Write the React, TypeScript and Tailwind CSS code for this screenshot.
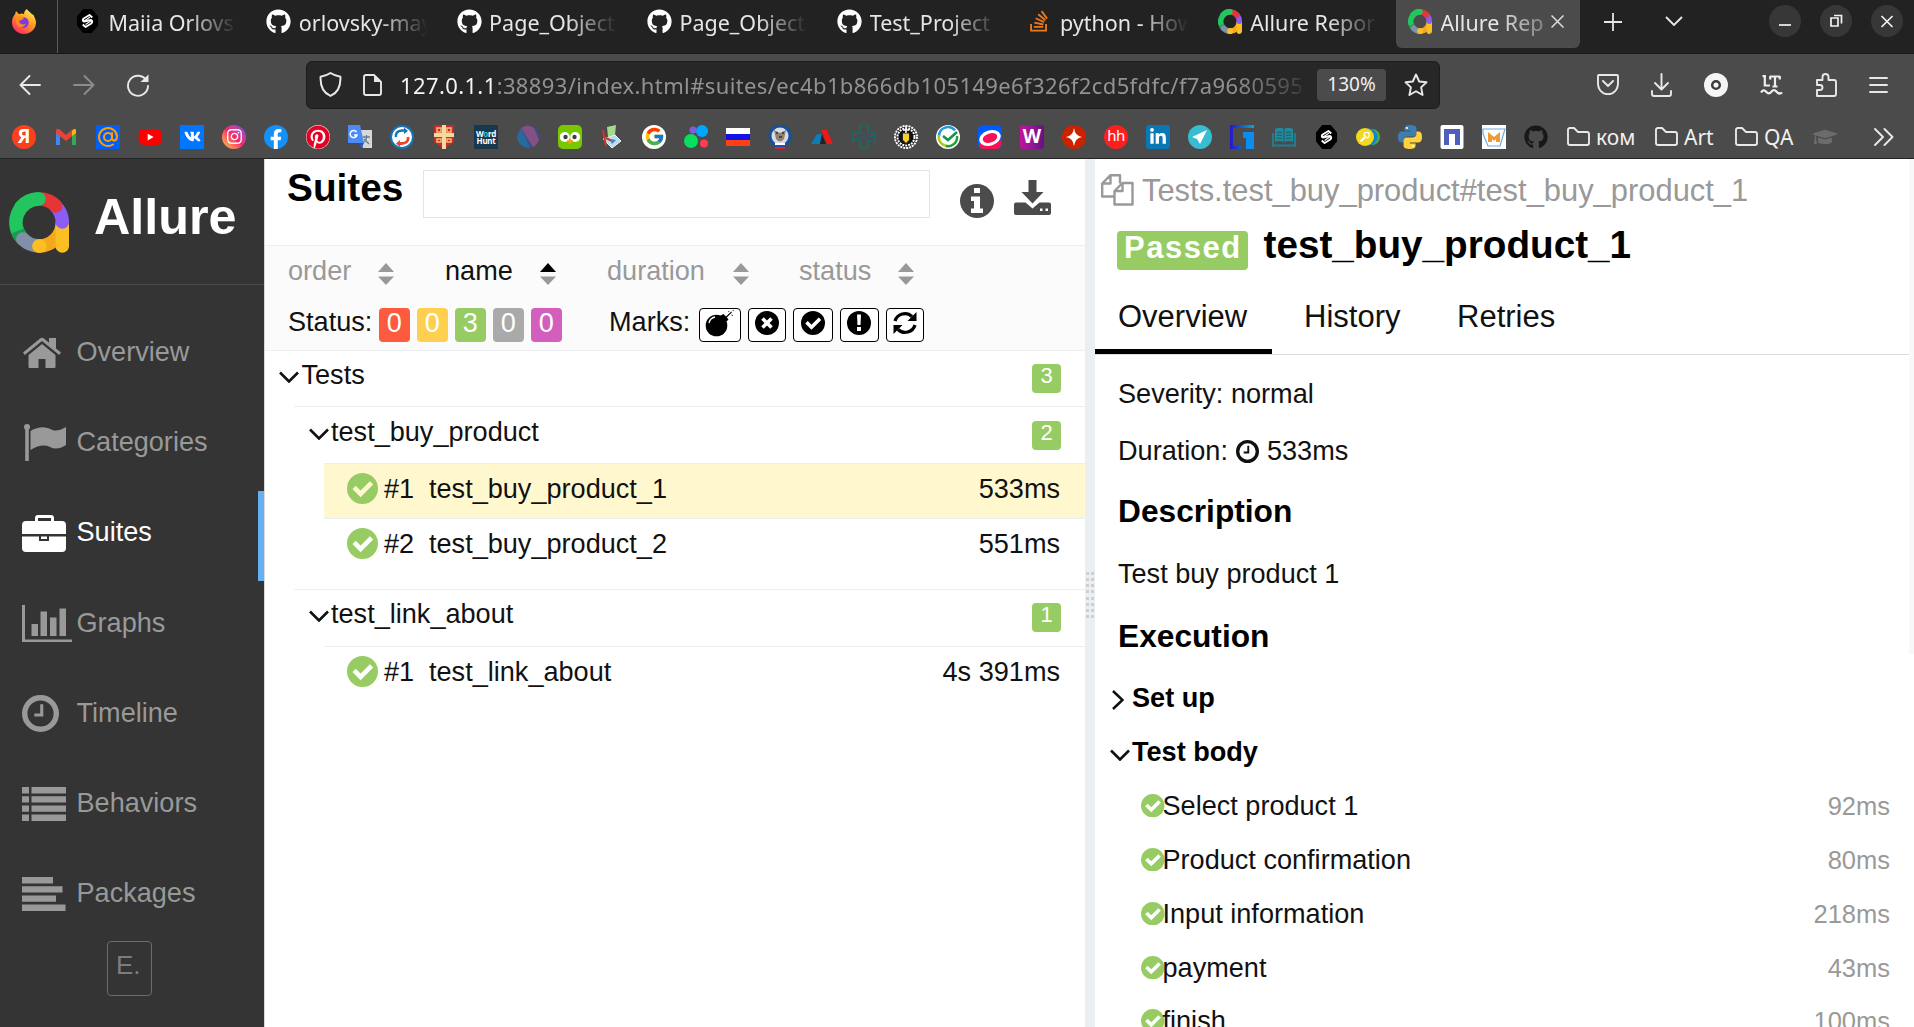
import React from "react";
import {
  FaGithub, FaYoutube, FaVk, FaPinterest, FaStackOverflow,
  FaInstagram, FaFacebookF, FaLinkedinIn, FaGraduationCap,
} from "react-icons/fa";
import { FcGoogle } from "react-icons/fc";

type SvgProps = { className?: string; children?: React.ReactNode; box?: string };
const Svg = ({ className = "size-6", children, box = "0 0 24 24" }: SvgProps) => (
  <svg viewBox={box} className={`${className} shrink-0`} fill="none" preserveAspectRatio="none">{children}</svg>
);

/* ---------- logos ---------- */
const AllureLogo = ({ className }: { className?: string }) => (
  <Svg className={className} box="0 0 60 61">
    <g strokeWidth="13.5" strokeLinecap="round">
      <path d="M30 7A23.4 23.4 0 0 0 13.8 47" stroke="#22c55e" />
      <path d="M8.500 39A23.4 23.4 0 0 0 13.8 47" stroke="#1a9c50" strokeLinecap="butt" />
      <path d="M13.8 47A23.4 23.4 0 0 0 30 54" stroke="#8090a8" />
      <path d="M30 54A23.4 23.4 0 0 0 53.3 31" stroke="#f5a81c" />
      <path d="M30 54H31M53.3 34V54" stroke="#fbbf24" />
      <path d="M47 14.5A23.4 23.4 0 0 1 53.3 30" stroke="#8b5cf6" />
      <path d="M34 7.2A23.4 23.4 0 0 1 46.8 14" stroke="#e53535" />
      <path d="M30 7A23.4 23.4 0 0 0 12 15" stroke="#22c55e" />
    </g>
  </Svg>
);
const Firefox = () => (
  <Svg className="h-[25px] w-6">
    <defs>
      <linearGradient id="ff" x1="0.8" y1="0" x2="0.2" y2="1">
        <stop offset="0" stopColor="#fff44f" /><stop offset=".45" stopColor="#ff9a1f" /><stop offset="1" stopColor="#ff2068" />
      </linearGradient>
    </defs>
    <path d="M15 0c1 2 3 3 5 5 1 0 2 1 2 2 1 2 2 4 2 6 0 6-5 11-12 11S0 19 0 13c0-3 1-6 3-8l1-3 3 3c2-1 4-1 5 0 0-2 1-4 3-5z" fill="url(#ff)" />
    <circle cx="11.7" cy="13" r="5" fill="#7b3be0" />
    <path d="M4 8c3-2 6-1 8 1-2 1-3 2-5 2 0 3 3 5 7 3-2 5-9 4-10-1z" fill="#ff8a20" />
  </Svg>
);
const Solid = () => (
  <Svg className="h-6 w-[23px]">
    <path d="M8 1h8l6 7v8l-6 7H8l-6-7V8z" fill="#000" stroke="#000" strokeLinejoin="round" strokeWidth="2" />
    <path d="M17 8.500 14 6 8 9.500q-2 2 .5 3l7-1.500q2.500 1 .5 3.500L10 18l-3-2.500" stroke="#fff" strokeWidth="2" strokeLinejoin="round" />
    <path d="M8.500 12 14.500 8.200M10 15.500l5.500-3.500" stroke="#fff" strokeWidth="1.300" />
  </Svg>
);

/* ---------- browser chrome ---------- */
const gh = <FaGithub className="size-[25px] text-white" />;
const tabs: { icon: React.ReactNode; title: string }[] = [
  { icon: <Solid />, title: "Maiia Orlovs" },
  { icon: gh, title: "orlovsky-may" },
  { icon: gh, title: "Page_Object" },
  { icon: gh, title: "Page_Object" },
  { icon: gh, title: "Test_Project" },
  { icon: <span className="flex size-6 justify-center"><FaStackOverflow className="h-6 w-5 text-[#e87a1c]" /></span>, title: "python - How" },
  { icon: <AllureLogo className="h-[25px] w-6" />, title: "Allure Repor" },
  { icon: <AllureLogo className="h-[25px] w-6" />, title: "Allure Rep" },
];

const TabBar = () => (
  <div className="flex h-[54px] shrink-0 border-b border-[#191919] bg-[#222222] text-[#e6e6e6]">
    <div className="flex w-[58px] items-start justify-center border-r border-[#5a5a5a] pt-[9px] pr-[10px]"><Firefox /></div>
    <div className="flex pl-[6px]">
      {tabs.map((t, i) => (
        <div key={i} className={`mr-[6.300px] flex h-12 w-[184px] items-start rounded-b-md pl-3 pt-[9px] ${i === 7 ? "bg-[#4b4b4b]" : ""}`}>
          <div className="flex w-[32.500px] shrink-0">{t.icon}</div>
          <div className={`h-7 shrink-0 whitespace-nowrap text-[21.500px] leading-[27px] ${i === 7 ? "w-[103px] [mask-image:linear-gradient(to_right,black_55%,rgba(0,0,0,0.35))]" : "w-[131px] [mask-image:linear-gradient(to_right,black_60%,transparent_98%)]"}`}>{t.title}</div>
          {i === 7 && <Svg className="ml-[7px] mt-[6px] size-[13px]" box="0 0 13 13"><path d="M.5.5l12 12M12.500.500l-12 12" stroke="#ddd" strokeWidth="1.500" /></Svg>}
        </div>
      ))}
    </div>
    <div className="flex grow items-start justify-between pl-[18px] pr-[11px] pt-[5px]">
      <div className="flex gap-[43px] pt-[8px]">
        <Svg className="size-[18px]" box="0 0 18 18"><path d="M9 0v18M0 9h18" stroke="#e6e6e6" strokeWidth="1.800" /></Svg>
        <Svg className="mt-[3px] h-[10px] w-[18px]" box="0 0 18 10"><path d="M1 1l8 8 8-8" stroke="#e6e6e6" strokeWidth="1.900" /></Svg>
      </div>
      <div className="flex gap-[19px]">
        {["M10 20h12", "M11 13h7v8h-7zM14 10.500h7.500v8", "M10.500 11l11 11M21.500 11l-11 11"].map((d) => (
          <span key={d} className="flex size-8 rounded-full bg-[#373737]"><Svg className="size-8" box="0 0 32 32"><path d={d} stroke="#f2f2f2" strokeWidth="1.700" /></Svg></span>
        ))}
      </div>
    </div>
  </div>
);

const ln = { stroke: "#e8e8e8", strokeWidth: 1.9, strokeLinecap: "round" as const, strokeLinejoin: "round" as const };

const Toolbar = () => (
  <div className="flex h-[61px] shrink-0 items-center">
    <div className="flex w-[306px] gap-[30px] pl-[18px]">
      <Svg><path d="M22 12H2.500M11.500 3 2.500 12l9 9" {...ln} /></Svg>
      <Svg><path d="M2 12h19.500M12.500 3l9 9-9 9" {...ln} stroke="#8c8c8c" /></Svg>
      <Svg><path d="M20.500 7.500A10 10 0 1 0 22 13" {...ln} /><path d="M22.500 1.500V9h-8z" fill="#e8e8e8" /></Svg>
    </div>
    <div className="flex h-12 w-[1134px] items-center rounded-md border border-[#1c1c1c] bg-[#272727] pl-[11px]">
      <Svg className="size-[25px]"><path d="M12 1c3 2 6 3 9.500 3.500C22 14 19 20 12 23 5 20 2 14 2.500 4.500 6 4 9 3 12 1z" {...ln} /></Svg>
      <Svg className="ml-[20px] h-[22px] w-[19px]" box="0 0 19 22"><path d="M3 1h8l7 7v11q0 2-2 2H3q-2 0-2-2V3q0-2 2-2z" {...ln} /><path d="M11 1v7h7z" fill="#e8e8e8" /></Svg>
      <div className="ml-[18px] w-[905px] shrink-0 whitespace-nowrap text-[22px] leading-7 tracking-[0.380px] text-[#929292] [mask-image:linear-gradient(to_right,black_92%,rgba(0,0,0,0.3)_99%,transparent)]">
        <span className="text-[#f4f4f4]">127.0.1.1</span>:38893/index.html#suites/ec4b1b866db105149e6f326f2cd5fdfc/f7a9680595
      </div>
      <div className="ml-[12px] flex h-8 w-[69px] items-center justify-center rounded-[4px] bg-[#4b4b4b] text-[19px] text-[#f0f0f0]">130%</div>
      <Svg className="ml-[18px] size-[24px]"><path d="M12 1.500l3.200 7 7.300.8-5.400 5.100 1.500 7.600L12 18.200 5.400 22l1.500-7.600L1.500 9.300l7.300-.8z" {...ln} /></Svg>
    </div>
    <div className="flex grow items-center justify-between pl-[157px] pr-[26px]">
      <Svg className="h-[21px] w-[22px]" box="0 0 22 21"><path d="M2 1h18q1 0 1 1v7c0 15-20 15-20 0V2q0-1 1-1zM6 7l5 5 5-5" {...ln} /></Svg>
      <Svg className="h-6 w-[21px]" box="0 0 21 24"><path d="M10.500 1v15M4 10l6.500 6.500L17 10M1 18v3q0 2 2 2h15q2 0 2-2v-3" {...ln} /></Svg>
      <Svg><circle cx="12" cy="12" r="12" fill="#f5f5f5" /><circle cx="12" cy="12" r="3.800" stroke="#3c3c3c" strokeWidth="2.500" /></Svg>
      <Svg className="h-5 w-[23px]" box="0 0 23 20"><path d="M2.500 1.200H6M4.800 0v10.500H10M10 1.500h10M15 1.500V12M10.200 1v3.500M19.800 1v3.500M12.500 11.500h5" stroke="#eee" strokeWidth="2.200" /><path d="M1 17.500q2.600-4 5.200-.8t5.200 0 5.200 0 5.600.8" stroke="#eee" strokeWidth="2.200" /></Svg>
      <Svg className="h-6 w-[22px]" box="0 0 22 24"><path d="M2 23V17h3q2.500 0 2.500-2.500T5 12H2V7h5.500V4q0-3 3-3t3 3v3H19q2 0 2 2v12q0 2-2 2z" {...ln} /></Svg>
      <Svg className="h-[16px] w-[19px]" box="0 0 19 16"><path d="M1 1h17M1 8h17M1 15h17" {...ln} /></Svg>
    </div>
  </div>
);

const Sq = ({ c, children }: { c: string; children?: React.ReactNode }) => (
  <span className={`flex size-6 shrink-0 items-center justify-center ${c}`}>{children}</span>
);

const Bookmarks = () => (
  <div className="flex h-[44px] shrink-0 items-center border-b border-[#232323] pl-3 text-[#f0f0f0]">
    <div className="flex gap-[18px]">
      <Sq c="rounded-full bg-[#fc3f1d] text-[19px] font-bold leading-none text-white">Я</Sq>
      <Svg><path d="M2 20V6l4 3v11z" fill="#4285f4" /><path d="M18 20V9l4-3v14z" fill="#34a853" /><path d="M2 6q0-3 3-2l7 6 7-6q3-1 3 2v2l-10 8L2 8z" fill="#ea4335" /><path d="M18 6q4-4 4 0v2l-4 3z" fill="#fbbc04" /></Svg>
      <Svg><path d="M0 0h24v24H0z" fill="#005ff9" /><circle cx="12" cy="12" r="4" stroke="#ff9e00" strokeWidth="2" /><path d="M16 8v5q.5 3 3 2.500 2-1 2-3.500a9 9 0 1 0-4 7.500" stroke="#ff9e00" strokeWidth="2" strokeLinecap="round" /></Svg>
      <FaYoutube className="size-6 text-[#ff0000] [background:linear-gradient(white,white)_center/8px_8px_no-repeat]" />
      <Sq c="bg-[#0077ff]"><FaVk className="size-[17px] text-white" /></Sq>
      <Sq c="rounded-full bg-gradient-to-bl from-[#7a2be8] via-[#fb1e67] to-[#fdc02e]"><FaInstagram className="size-[17px] text-white" /></Sq>
      <Sq c="rounded-full bg-[#1590f5]"><FaFacebookF className="mt-[4px] size-[20px] text-white" /></Sq>
      <span className="size-6 rounded-full bg-white"><FaPinterest className="size-6 text-[#e60023]" /></span>
      <Svg><path d="M9 5h15v18h-9z" fill="#d8d8d8" /><path d="M0 0h12l4 18H0z" fill="#4c8bf5" /><path d="M8.500 7A3.500 3.500 0 1 0 9 10H6" stroke="#fff" strokeWidth="1.500" /><path d="M15 12h7M18.500 10v2q0 4-4 6M16 14l5 5" stroke="#5f7f90" strokeWidth="1.300" /><path d="M11 18h5l-3 6z" fill="#2857c8" /></Svg>
      <Svg><circle cx="12" cy="12" r="11" fill="#fff" stroke="#1674b8" strokeWidth="2" /><path d="M6 12q-1-6 6-6.500h3" stroke="#1677b8" strokeWidth="2.500" /><path d="M14 2.500 18 6l-4 3z" fill="#1677b8" /><path d="M18 12q1 6-6 6.500H9" stroke="#e5482f" strokeWidth="2.800" /><path d="M10 15 6 18.500 10 22z" fill="#e5482f" /></Svg>
      <Svg><path d="M2 0h20v17l-10 7-10-7z" fill="#c92c28" /><path d="M12 0v24M2 10h20" stroke="#f6d9a0" strokeWidth="4" /><path d="M5 3h4v4H5zM15 3h4v4h-4zM5 14h4v3H5zM15 14h4v3h-4z" stroke="#f2bd78" strokeWidth="1.500" /></Svg>
      <Sq c="flex-col bg-[#17384d] text-[8px] font-bold leading-[7px] tracking-[-0.300px] text-white"><span>W<span className="text-[#24c7ce]">o</span>rd</span><span>Hunt</span></Sq>
      <Svg><circle cx="12" cy="12" r="11" fill="#37508e" /><path d="M5 3q7-5 13 0l5 12q-3 6-6 7z" fill="#855083" /><path d="M5 3 1 12q1 10 13 11z" fill="#276b9d" /></Svg>
      <Svg><rect width="24" height="24" rx="5" fill="#78c800" /><circle cx="6.800" cy="12" r="5" fill="#fff" /><circle cx="17.200" cy="12" r="5" fill="#fff" /><circle cx="7.500" cy="12" r="2.200" fill="#404040" /><circle cx="16.500" cy="12" r="2.200" fill="#404040" /><path d="M9 15h6l-3 5z" fill="#ff9d1b" /></Svg>
      <Svg><path d="M7 2l9-2-1 10-7 2z" fill="#a5d98c" /><path d="M3 14l12-4 6 6-9 7z" fill="#b7dff0" stroke="#e8f5fa" /><path d="M3 5l3 16M6 13l6 3" stroke="#cc3928" strokeWidth="2" /><path d="M10 14l6 1-4 4z" fill="#447fc2" /></Svg>
      <Sq c="rounded-full bg-white"><FcGoogle className="size-[21px]" /></Sq>
      <Svg><circle cx="9" cy="5" r="3.500" fill="#8a58dd" /><circle cx="18" cy="6" r="6" fill="#00a5ff" /><circle cx="7" cy="16" r="7" fill="#05e05d" /><circle cx="20" cy="18.500" r="4" fill="#ff3d4f" /></Svg>
      <Svg><path d="M0 3h24v6H0z" fill="#fff" /><path d="M0 9h24v6H0z" fill="#1111e8" /><path d="M0 15h24v6H0z" fill="#ff4017" /></Svg>
      <Svg><circle cx="12" cy="11" r="10" fill="#d9dbe0" stroke="#17519c" strokeWidth="3" /><path d="M6 5l6 3 6-3-2 9q-4 5-8 0z" fill="#8f8270" /><path d="M8 8h2M14 8h2M11 12h3" stroke="#333" strokeWidth="1.500" /><path d="M7 18h10v2H7z" fill="#fff" /><path d="M7 20h10v2H7z" fill="#1c50c0" /><path d="M7 22h10v2H7z" fill="#d22" /></Svg>
      <Svg><path d="M1 19 7 9h5l-2 10z" fill="#0f7cb7" /><path d="M11 5h6l6 14h-6z" fill="#ef1717" /><path d="M12 9l4 10h-6z" fill="#222" /></Svg>
      <Svg><path d="M8 1h8v7h7v8h-7v7H8v-7H1V8h7z" stroke="#1d6a62" strokeWidth="1.600" /><path d="M3 13h5l2-2 2 3 3-3h6" stroke="#285a78" strokeWidth="1.300" /></Svg>
      <Svg><circle cx="12" cy="12" r="11" stroke="#fff" strokeWidth="2" strokeDasharray="2 1" /><circle cx="12" cy="12" r="10" fill="#111" /><circle cx="12" cy="12" r="8.500" stroke="#fff" strokeDasharray="2 1" strokeWidth="2" /><path d="M8.500 8h7v7L12 18.500 8.500 15z" fill="#f5cf2b" stroke="#222" /><path d="M12 1v7M9 5h6" stroke="#fff" strokeWidth="1.500" /></Svg>
      <Svg><circle cx="12" cy="12" r="12" fill="#fff" /><path d="M19 5.500A9 9 0 0 0 3 11" stroke="#2498dd" strokeWidth="2.500" /><path d="M3 10a9 9 0 0 0 9 11" stroke="#a8cc20" strokeWidth="2.500" /><path d="M10 21a9 9 0 0 0 11-10" stroke="#21a038" strokeWidth="2.500" /><path d="M7 11l5 4 9-8" stroke="#159447" strokeWidth="2.500" /></Svg>
      <Svg><rect width="24" height="24" rx="5" fill="#005bff" /><path d="M1 16q11 8 22-1v4q0 5-5 5H6q-5 0-5-5z" fill="#f91155" /><ellipse cx="12" cy="13" rx="11" ry="7.500" transform="rotate(-18 12 13)" fill="#fff" /><ellipse cx="12" cy="13" rx="7.500" ry="4.500" transform="rotate(-18 12 13)" fill="#f91155" /></Svg>
      <Sq c="rounded-[3px] bg-gradient-to-r from-[#c4119e] to-[#641084] text-[19px] font-bold leading-none text-white">W</Sq>
      <Svg><circle cx="12" cy="12" r="12" fill="#cc2200" /><path d="M12 3q1 8 8 9-7 1-8 9-1-8-8-9 7-1 8-9z" fill="#fff" /></Svg>
      <Sq c="rounded-full bg-[#ff1e1e] pb-[2px] text-[15px] leading-none tracking-[-0.500px] text-white">hh</Sq>
      <Sq c="rounded-[3px] bg-[#0a78b5]"><FaLinkedinIn className="size-[18px] text-white" /></Sq>
      <Svg><circle cx="12" cy="12" r="12" fill="#37bcd1" /><path d="M19 5 4 12l5 2 3 5 2-4z" fill="#fff" /></Svg>
      <Svg>
        <defs>
          <linearGradient id="cyan"><stop stopColor="#2a14c8" /><stop offset="1" stopColor="#00a8d8" /></linearGradient>
        </defs>
        <path d="M0 0h24v3H3v18h8v3H0z" fill="url(#cyan)" /><path d="M13 7h11v17h-8V13h-3z" fill="#0a8cf0" />
      </Svg>
      <Svg><path d="M3 4q5-2.500 9 0 4-2.500 9 0v13q-5-2-9 .5Q8 15 3 17z" fill="#1e8a9b" /><path d="M12 4v13M5 7.500q3-1 5 0M5 10.500q3-1 5 0M5 13.500q3-1 5 0M14 7.500q3-1 5 0M14 10.500q3-1 5 0M14 13.500q3-1 5 0" stroke="#2c5560" /><path d="M1 8v12.500h22V8" stroke="#1e7f91" strokeWidth="2" /></Svg>
      <Sq c=""><Solid /></Sq>
      <Svg><circle cx="16" cy="12" r="8" fill="#43b04a" /><circle cx="13" cy="12" r="8.500" fill="#1184c8" /><circle cx="9" cy="12" r="9" fill="#f4d81c" /><path d="M4.500 16.500 9 12" stroke="#fff" strokeWidth="2.200" /><path d="M9 7.500h4v4.500l-2 1-3-3z" stroke="#fff" strokeWidth="1.200" /></Svg>
      <Svg box="0 0 448 512"><path d="M220 0c-60 0-100 20-100 70v50h108v18H70C20 138 0 190 0 256s20 118 60 118h44v-60c0-50 40-70 80-70h110c30 0 50-30 50-60V70c0-50-50-70-124-70z" fill="#3d7db0" /><path d="M228 512c60 0 100-20 100-70v-50H220v-18h158c50 0 70-52 70-118s-20-118-60-118h-44v60c0 50-40 70-80 70H154c-30 0-50 30-50 60v114c0 50 50 70 124 70z" fill="#ffd23e" /><circle cx="166" cy="65" r="22" fill="#fff" /><circle cx="282" cy="447" r="22" fill="#fff" /></Svg>
      <Svg><rect x=".5" width="23" height="24" rx="2" fill="#fff" /><path d="M4 4h16v16h-5V9H9v11H4z" fill="#4f5fbd" /></Svg>
      <Svg><path d="M0 0h24v24H0z" fill="#fff" /><path d="M1 4h22l-5 17H6L1 9z" stroke="#6baae0" strokeWidth="1.200" /><path d="M6 17V7l6 5 6-5v10h-4v-3l-2 2-2-2v3z" fill="#f09a33" /></Svg>
      <FaGithub className="size-6 text-[#191717]" />
    </div>
    <div className="flex items-center text-[21px] leading-7">
      {[["ком", "ml-[19px] w-[88px]"], ["Art", "w-[80px]"], ["QA", "w-[78px]"]].map(([n, c]) => (
        <div key={n} className={`flex items-center gap-[6px] ${c}`}>
          <Svg className="h-[19px] w-[23px]" box="0 0 23 19"><path d="M3 1h4l4 4h9q2 0 2 2v9q0 2-2 2H3q-2 0-2-2V3q0-2 2-2z" {...ln} /></Svg>
          <span>{n}</span>
        </div>
      ))}
      <FaGraduationCap className="size-6 text-[#6c6c6c]" />
      <Svg className="ml-[37px] h-[18px] w-5" box="0 0 20 18"><path d="M1 1l8 8-8 8M10.500 1l8 8-8 8" {...ln} /></Svg>
    </div>
  </div>
);

/* ---------- report icons ---------- */
const CheckCircle = ({ className, fill = "#97cc64", mark = "#fff" }: { className: string; fill?: string; mark?: string }) => (
  <Svg className={className}><circle cx="12" cy="12" r="12" fill={fill} /><path d="M5.500 11.200l5 5 8.500-8.500" stroke={mark} strokeWidth="3.600" /></Svg>
);
const Clock = ({ className, w = 3.5 }: { className: string; w?: number }) => (
  <Svg className={className}><circle cx="12" cy="12" r={12 - w / 2} stroke="currentColor" strokeWidth={w} /><path d="M12.800 6v7H8" stroke="currentColor" strokeWidth="2" /></Svg>
);
const Chevron = ({ open, className = "" }: { open?: boolean; className?: string }) =>
  open ? (
    <Svg className={`h-3 w-5 ${className}`} box="0 0 20 12"><path d="M1 1.500l9 9 9-9" stroke="#111" strokeWidth="2.600" /></Svg>
  ) : (
    <Svg className={`h-5 w-3 ${className}`} box="0 0 12 20"><path d="M1 1l9.500 9L1 19" stroke="#111" strokeWidth="2.600" /></Svg>
  );

const navIcons = {
  home: <Svg className="ml-[1px] h-[31px] w-[38px]" box="0 0 38 31"><path d="M0 15.500 17 1.500q2-1.500 4 0l5 4.200V1h7v10.500l5 4-1.800 2.500L19 4 1.800 18z" fill="currentColor" /><path d="M5.500 18 19 7l13.500 11v12q0 1-1 1H22.500v-9h-7v9H6.500q-1 0-1-1z" fill="currentColor" /></Svg>,
  flag: <Svg className="ml-[2px] h-[37px] w-[42px]" box="0 0 42 37"><circle cx="3" cy="3" r="3" fill="currentColor" /><path d="M1.200 4h3.600v33H1.200z" fill="currentColor" /><path d="M6.500 7q12-7 22-1 5 2 13.500-3v18q-9 6-16 2-8-4-19.500 3z" fill="currentColor" /></Svg>,
  case: <Svg className="h-[37px] w-[44px]" box="0 0 44 37"><path d="M14.500 6V3q0-1.500 1.500-1.500h13q1.500 0 1.500 1.500v3" stroke="currentColor" strokeWidth="3" /><path d="M4 6h36q4 0 4 4v9H0v-9q0-4 4-4zM0 21.500h17V26h10v-4.500h17V33q0 4-4 4H4q-4 0-4-4zM19 21.500h6v2.500h-6z" fill="currentColor" /></Svg>,
  graph: <Svg className="h-[37px] w-[50px]" box="0 0 50 37"><path d="M0 0h3v34.500h47V37H0zM9.500 19h6.500v12H9.500zM18.500 6.500H25V31h-6.500zM28 12.500h6.500V31H28zM37.500 3.500H44V31h-6.500z" fill="currentColor" /></Svg>,
  clock: <Clock className="size-[37px]" />,
  list: <Svg className="h-[34px] w-[44px]" box="0 0 44 34"><path d="M0 3.200h7M9.500 3.200H44M0 12.400h7M9.500 12.400H44M0 21.600h7M9.500 21.600H44M0 30.800h7M9.500 30.800H44" stroke="currentColor" strokeWidth="6.400" /></Svg>,
  align: <Svg className="h-[34px] w-[44px]" box="0 0 44 34"><path d="M0 3.200h31M0 12.400h40.500M0 21.600h34M0 30.800h43.500" stroke="currentColor" strokeWidth="6.400" /></Svg>,
};
const nav: [string, keyof typeof navIcons][] = [
  ["Overview", "home"], ["Categories", "flag"], ["Suites", "case"], ["Graphs", "graph"],
  ["Timeline", "clock"], ["Behaviors", "list"], ["Packages", "align"],
];

const Sidebar = () => (
  <aside className="flex w-[264px] shrink-0 flex-col bg-[#343434]">
    <div className="flex h-[126px] shrink-0 border-b border-[#4c4c4c] pl-[9px]">
      <AllureLogo className="mt-[33px] h-[61px] w-[60px]" />
      <div className="ml-[25px] mt-[30px] text-[50.300px] font-bold leading-[56px] text-white">Allure</div>
    </div>
    <nav className="pt-[25px] text-[27.100px]">
      {nav.map(([name, icon]) => {
        const on = name === "Suites";
        return (
          <div key={name} className={`flex h-[90.300px] items-center pl-[22px] ${on ? "border-r-[6px] border-[#63b0f3] text-white" : "text-[#999999]"}`}>
            <div className="flex w-[54.500px] shrink-0 items-center pb-[5px]">{navIcons[icon]}</div>
            <div className="pb-[7px] leading-8">{name}</div>
          </div>
        );
      })}
    </nav>
    <div className="-mt-[1px] ml-[107px] h-[55px] w-[45px] rounded-[4px] border border-[#6c6c6c] pl-[8px] pt-[7px] text-[26px] leading-8 text-[#7d7d7d]">E.</div>
  </aside>
);

const Sort = ({ up }: { up?: boolean }) => (
  <Svg className="h-[22px] w-4" box="0 0 16 22"><path d="M8 0l8 9H0z" fill={up ? "#000" : "#999"} /><path d="M0 13.500h16L8 22z" fill="#999" /></Svg>
);
const sorts: [string, string, string][] = [
  ["order", "w-[157px]", "w-[90px]"], ["name", "w-[162px]", "w-[95px]"], ["duration", "w-[192px]", "w-[126px]"], ["status", "w-[150px]", "w-[99px]"],
];
const counters: [string, string][] = [
  ["0", "bg-[#fd5a3e]"], ["0", "bg-[#ffd050]"], ["3", "bg-[#97cc64]"], ["0", "bg-[#aaaaaa]"], ["0", "bg-[#d35ebe]"],
];
const Mark = ({ c, children }: { c: string; children: React.ReactNode }) => (
  <div className={`flex h-[34.500px] justify-center rounded-[4px] border-[1.500px] border-black bg-white pt-[1px] ${c}`}>{children}</div>
);
const Group = ({ name, n, c }: { name: string; n: string; c: string }) => (
  <div className={`flex justify-between ${c}`}>
    <div className="flex"><Chevron open className="mr-[2.500px] mt-[12px]" /><span className="leading-8">{name}</span></div>
    <span className="mr-[24px] mt-[5px] flex h-[29px] w-[29px] justify-center rounded-[4px] bg-[#97cc64] text-[22px] leading-[24px] text-white">{n}</span>
  </div>
);
const Leaf = ({ n, name, time, c, mark }: { n: string; name: string; time: string; c: string; mark?: string }) => (
  <div className={`ml-[59px] flex border-t border-[#eceff1] pl-[23px] pr-[25px] leading-8 ${c}`}>
    <CheckCircle className="size-[31px]" mark={mark} />
    <span className="ml-[6px] w-[45px]">{n}</span>
    <span className="grow">{name}</span>
    <span>{time}</span>
  </div>
);

const Suites = () => (
  <section className="flex w-[821px] shrink-0 flex-col border-l border-[#d8d8d8] bg-white text-[27.100px] text-[#111]">
    <div className="flex h-[87px] shrink-0 border-b border-[#eceff1]">
      <h1 className="ml-[22px] mt-[7px] w-[136px] text-[38.800px] font-bold leading-[44px] text-black">Suites</h1>
      <div className="mt-[11px] h-[48px] w-[507px] border-[1.500px] border-[#e5e5e5]" />
      <Svg className="ml-[30px] mt-[25px] size-[34px]" box="0 0 34 34"><circle cx="17" cy="17" r="17" fill="#4b4b4b" /><path d="M14 4h6v5h-6zM11 12.500h9v12h3V29H11v-4.500h3V17h-3z" fill="#fff" /></Svg>
      <Svg className="ml-[20px] mt-[21px] h-[35px] w-[37px]" box="0 0 37 35"><path d="M14.500 0h8v12h7L18.500 23.500 7.500 12h7z" fill="#4b4b4b" /><path d="M2 22.500h9.500l7 6 7-6H35q2 0 2 2V33q0 2-2 2H2q-2 0-2-2v-8.500q0-2 2-2z" fill="#4b4b4b" /><path d="M26 28.500h2.500V31H26zM31.500 28.500H34V31h-2.500z" fill="#fff" /></Svg>
    </div>
    <div className="h-[105px] shrink-0 border-b border-[#eceff1] bg-[#fbfbfb] pl-[23px]">
      <div className="flex pt-[9px] leading-8">
        {sorts.map(([s, w, lw]) => (
          <div key={s} className={`flex ${w} ${s === "name" ? "text-[#111]" : "text-[#999]"}`}>
            <span className={lw}>{s}</span><div className="pt-[8px]"><Sort up={s === "name"} /></div>
          </div>
        ))}
      </div>
      <div className="mt-[19px] flex leading-8">
        <span className="w-[91px] shrink-0">Status:</span>
        <div className="flex w-[230px] shrink-0 gap-[7.500px] pt-[1.500px]">
          {counters.map(([n, c], i) => <span key={i} className={`flex h-[34.500px] w-[30.500px] justify-center rounded-[4px] leading-[29px] text-white ${c}`}>{n}</span>)}
        </div>
        <span className="w-[90px] shrink-0">Marks:</span>
        <div className="flex gap-[7px] pt-[1.500px]">
          <Mark c="w-[42px]"><Svg className="h-[27px] w-[30px]" box="0 0 30 27"><circle cx="11.500" cy="15.500" r="10.800" fill="#000" /><path d="M15.500 5.500l6 6 2-2-1.700-2L27 2.200l-.7-.7L21 6.500 18.500 4z" fill="#000" /><path d="M23.500 2l.5-1M26.500 5l1.500.500M28 1l.500-1" stroke="#000" strokeWidth=".8" /><path d="M4 13q1-5 6-6" stroke="#fff" strokeWidth="1.300" /></Svg></Mark>
          <Mark c="w-[38px]"><Svg className="mt-[1px] size-[24px]"><circle cx="12" cy="12" r="12" fill="#000" /><path d="M7.500 7.500l9 9M16.500 7.500l-9 9" stroke="#fff" strokeWidth="3.600" /></Svg></Mark>
          <Mark c="w-[39.500px]"><CheckCircle className="mt-[1px] size-[24px]" fill="#000" /></Mark>
          <Mark c="w-[39.500px]"><Svg className="mt-[1px] size-[24px]"><circle cx="12" cy="12" r="12" fill="#000" /><path d="M10 3.500h4l-.5 10.500h-3zM10 16h4v4h-4z" fill="#fff" /></Svg></Mark>
          <Mark c="w-[38px]"><Svg className="mt-[1px] size-[24px]"><path d="M2 10A10.300 10.300 0 0 1 19 5.500M22 14A10.300 10.300 0 0 1 5 18.500" stroke="#000" strokeWidth="3.300" /><path d="M23.500 1v9h-9zM.500 23v-9h9z" fill="#000" /></Svg></Mark>
        </div>
      </div>
    </div>
    <Group name="Tests" n="3" c="h-[54.500px] pt-[8px] pl-[14px]" />
    <Group name="test_buy_product" n="2" c="ml-[29px] h-[57px] border-t border-[#eceff1] pt-[9px] pl-[14.500px]" />
    <Leaf n="#1" name="test_buy_product_1" time="533ms" mark="#fff8cf" c="h-[55px] bg-[#fff8cf] pt-[9px]" />
    <Leaf n="#2" name="test_buy_product_2" time="551ms" c="h-[71px] pt-[9px]" />
    <Group name="test_link_about" n="1" c="ml-[29px] h-[57px] border-t border-[#eceff1] pt-[8px] pl-[14.500px]" />
    <Leaf n="#1" name="test_link_about" time="4s 391ms" c="pt-[9px]" />
  </section>
);

const steps: [string, string][] = [
  ["Select product 1", "92ms"], ["Product confirmation", "80ms"], ["Input information", "218ms"], ["payment", "43ms"], ["finish", "100ms"],
];

const Details = () => (
  <section className="relative flex min-w-0 grow flex-col overflow-hidden bg-white text-[27.100px] leading-8 text-[#111]">
    <div className="flex h-[58px] shrink-0 pl-[6px] pt-[14px] text-[30.900px] leading-[36px] text-[#999]">
      <Svg className="mr-[8px] mt-[1px] h-[32px] w-[33px]" box="0 0 33 32"><path d="M13.500 22.500H1.200V9.500L9.500 1.200H19v8.300M9.500 1.200v8.300H1.200M13.500 17l8-8h10v21.500H13.500zM21.500 9v8h-8" stroke="#999" strokeWidth="2.400" strokeLinejoin="round" /></Svg>
      <span>Tests.test_buy_product#test_buy_product_1</span>
    </div>
    <div className="flex h-[74px] shrink-0 pl-[22px] pt-[6px]">
      <span className="mt-[8px] h-[39px] w-[131px] rounded-[4px] bg-[#97cc64] pl-[7px] text-[31px] font-bold leading-[33px] tracking-[1.500px] text-white">Passed</span>
      <h2 className="ml-[15.500px] text-[38.700px] font-bold leading-[44px] text-black">test_buy_product_1</h2>
    </div>
    <div className="flex h-[64px] shrink-0 border-b border-[#dcdcdc] text-[31px] leading-[52px]">
      <div className="w-[177px] border-b-[5px] border-black pl-[23px]">Overview</div>
      <div className="ml-[32px] w-[153px]">History</div>
      <div>Retries</div>
    </div>
    <div className="flex flex-col pl-[23px]">
      <p className="pt-[23px]">Severity: normal</p>
      <p className="mt-[25px] flex">Duration: <Clock className="ml-[8px] mr-[8px] mt-[5px] size-[23px]" w={3.5} /> 533ms</p>
      <h3 className="mt-[26px] text-[31.700px] font-bold leading-[36px] text-black">Description</h3>
      <p className="mt-[29px]">Test buy product 1</p>
      <h3 className="mt-[28px] text-[31.700px] font-bold leading-[36px] text-black">Execution</h3>
      <div className="-ml-[6px] mt-[28px] flex font-bold text-black"><Chevron className="mr-[8px] mt-[8px]" />Set up</div>
      <div className="-ml-[8px] mt-[22px] flex font-bold text-black"><Chevron open className="mr-[2px] mt-[13px]" />Test body</div>
      {steps.map(([s, t]) => (
        <div key={s} className="mt-[21.900px] flex h-8 pl-[23px] pr-[24px]">
          <CheckCircle className="mt-[4px] -mr-[2px] size-[23.500px]" />
          <span className="grow">{s}</span>
          <span className="text-[25.500px] text-[#999]">{t}</span>
        </div>
      ))}
    </div>
    <div className="absolute right-0 top-0 h-[495px] w-[5px] bg-[#f8f8f8]" />
  </section>
);

export default function App() {
  return (
    <div className="flex h-[1027px] w-[1914px] flex-col overflow-hidden bg-[#4b4b4b] font-['Noto_Sans',sans-serif]">
      <TabBar />
      <Toolbar />
      <Bookmarks />
      <main className="flex min-h-0 grow overflow-hidden font-['Liberation_Sans',Arial,sans-serif]">
        <Sidebar />
        <Suites />
        <div className="flex w-[10px] shrink-0 justify-center bg-[#eceff1] pt-[413px]">
          <div className="grid h-[46px] grid-cols-2 gap-x-[2px] gap-y-[3px]">
            {Array.from({ length: 16 }, (_, i) => <i key={i} className="size-[3px] bg-[#cfcfcf]" />)}
          </div>
        </div>
        <Details />
      </main>
    </div>
  );
}
